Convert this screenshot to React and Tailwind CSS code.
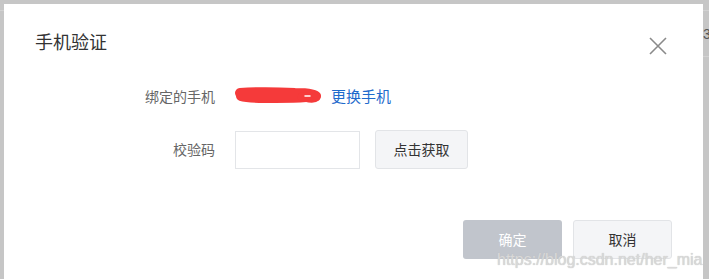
import React from "react";

const font = "font-['Microsoft_YaHei','Noto_Sans_CJK_SC',sans-serif]";

function CloseIcon() {
    return (
        <svg width="18" height="18" viewBox="0 0 18 18" fill="none">
            <path d="M1 1L17 17M17 1L1 17" stroke="#8a8a8a" strokeWidth="1.6" />
        </svg>
    );
}

function Scribble() {
    return (
        <svg width="88" height="20" viewBox="0 0 88 20" fill="none">
            <path d="M5 7 C20 6 40 6 60 7 C72 7 80 8 81 10 C74 12 50 12 30 12 C18 12 9 11 6 10" stroke="#f53a3a" strokeWidth="10" strokeLinecap="round" strokeLinejoin="round" />
            <path d="M67 11 C74 12 79 13 81 11" stroke="#f53a3a" strokeWidth="9" strokeLinecap="round" />
            <path d="M70 10 L75 10" stroke="#ffffff" strokeWidth="1.5" strokeLinecap="round" />
        </svg>
    );
}

export default function App() {
    return (
        <div className={`relative w-[709px] h-[279px] overflow-hidden bg-[#c6c6c6] pt-[4px] pl-[4px] ${font}`}>
            {/* page behind the overlay */}
            <div className="absolute right-0 top-[10px] w-[6px] h-px bg-[#d2d2d2]" />
            <div className="absolute right-0 top-[56px] w-[6px] h-px bg-[#d2d2d2]" />
            <div className="absolute left-0 top-[10px] w-[4px] h-px bg-[#d2d2d2]" />
            <span className="absolute left-[703px] top-[24px] text-[14px] leading-5 text-[#555] font-['Liberation_Sans',sans-serif]">3</span>

            <div className="relative w-[699px] h-[290px] bg-white flex flex-col">
                <div className="pt-[25px] pl-[31px] text-[18px] leading-6 text-[#333]">手机验证</div>
                <button className="absolute left-[645px] top-[33px]">
                    <CloseIcon />
                </button>

                <div className="mt-[24px] flex items-center h-[38px]">
                    <div className="w-[211px] text-right text-[14px] text-[#666]">绑定的手机</div>
                    <div className="ml-[20px] flex items-center">
                        <Scribble />
                        <a className="ml-[8px] text-[15px] text-[#1f6bcc]">更换手机</a>
                    </div>
                </div>

                <div className="mt-[15px] flex items-center h-[39px]">
                    <div className="w-[211px] text-right text-[14px] text-[#666]">校验码</div>
                    <input className="ml-[20px] w-[125px] h-[38px] border border-[#e3e5e8] outline-none" />
                    <button className="ml-[15px] w-[93px] h-[39px] bg-[#f4f5f7] border border-[#e2e4e7] rounded-[3px] text-[14px] text-[#333]">点击获取</button>
                </div>

                <div className="mt-[51px] flex justify-end gap-[11px] pr-[31px]">
                    <button className="w-[99px] h-[39px] bg-[#c1c5cc] rounded-[3px] text-[14px] text-white">确定</button>
                    <button className="w-[99px] h-[39px] bg-[#f4f5f7] border border-[#e2e4e7] rounded-[3px] text-[14px] text-[#333]">取消</button>
                </div>
            </div>

            <span className="absolute left-[497px] top-[252px] text-[16px] leading-4 text-[#d9d9d9] font-['Liberation_Sans',sans-serif] [text-shadow:0_0_1px_#bbb]">https://blog.csdn.net/her_mia</span>
        </div>
    );
}
